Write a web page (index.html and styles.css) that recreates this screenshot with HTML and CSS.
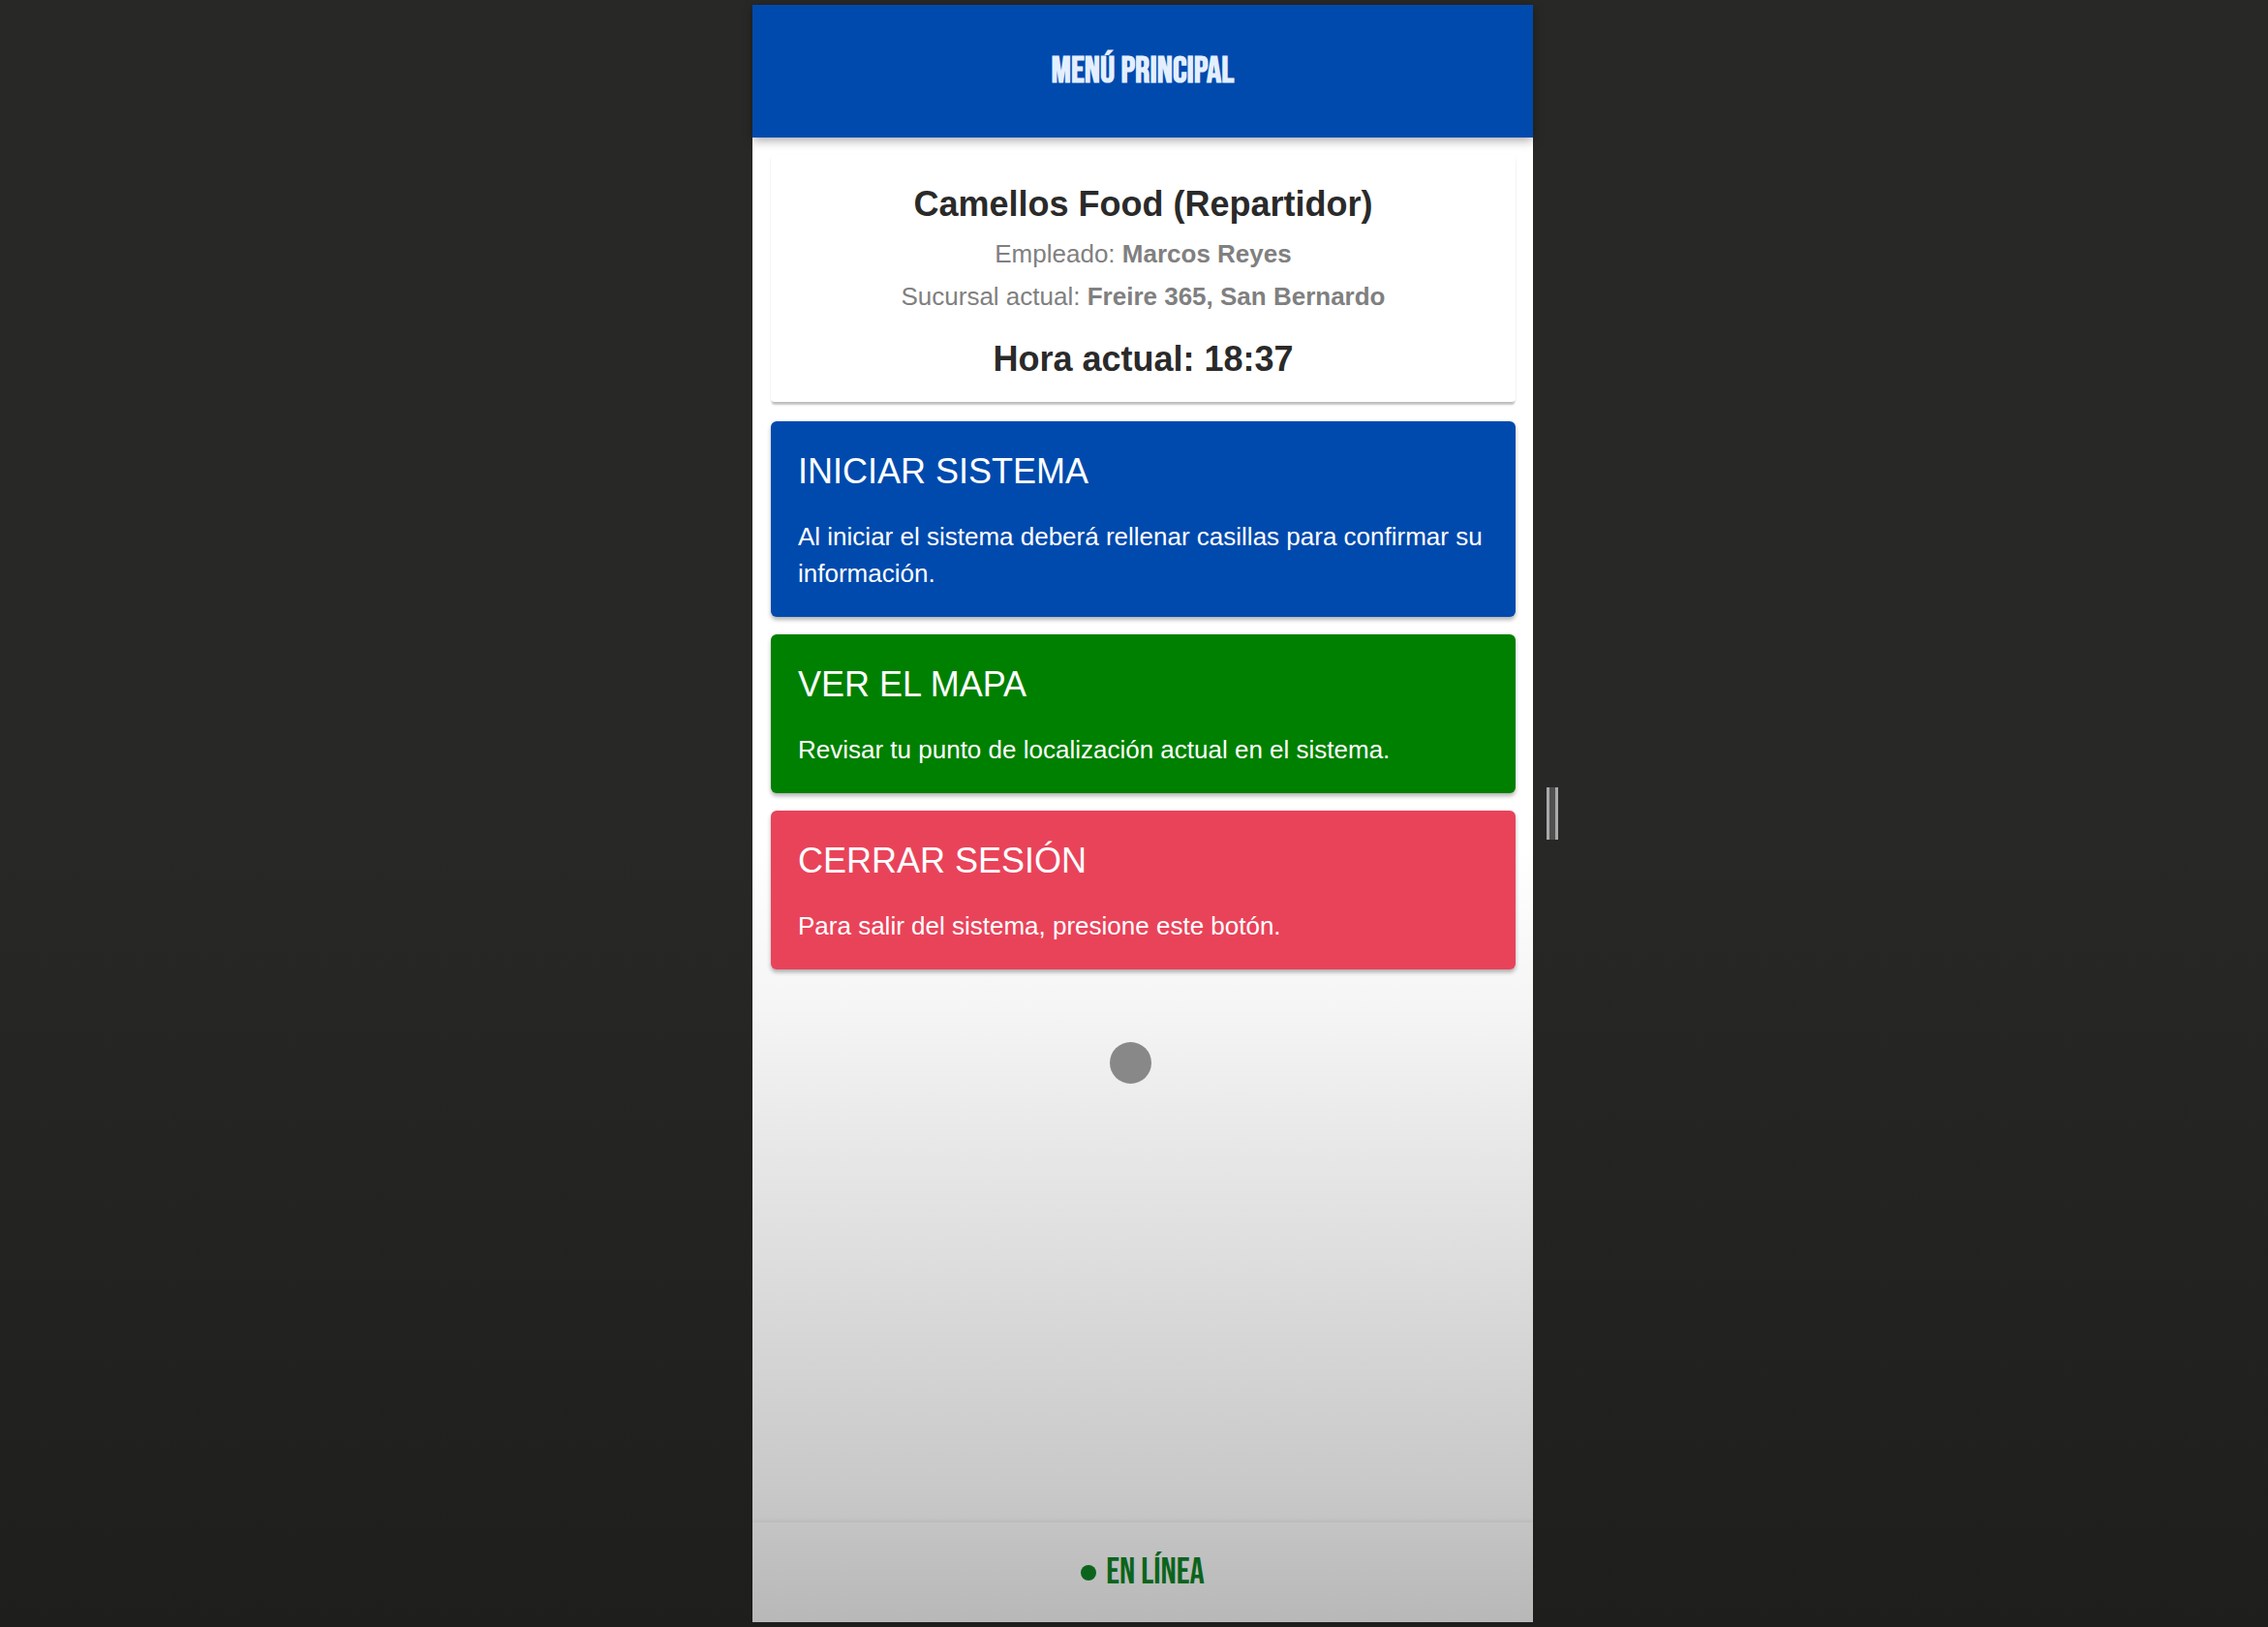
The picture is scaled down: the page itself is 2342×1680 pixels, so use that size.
FILE: index.html
```html
<!DOCTYPE html>
<html lang="es">
<head>
<meta charset="utf-8">
<meta name="viewport" content="width=device-width, initial-scale=1">
<title>Menú principal</title>
<link rel="stylesheet" href="styles.css">
</head>
<body>
<div class="stage">
  <div class="screen">
    <header class="topbar"><h1 class="topbar-title">MENÚ PRINCIPAL</h1></header>
    <main class="content">
      <section class="profile">
        <h2 class="profile-title">Camellos Food (Repartidor)</h2>
        <p class="profile-line">Empleado: <strong>Marcos Reyes</strong></p>
        <p class="profile-line">Sucursal actual: <strong>Freire 365, San Bernardo</strong></p>
        <p class="profile-time">Hora actual: 18:37</p>
      </section>
      <nav class="actions">
        <button class="action action-start" type="button">
          <span class="action-title">INICIAR SISTEMA</span>
          <span class="action-text">Al iniciar el sistema deberá rellenar casillas para confirmar su información.</span>
        </button>
        <button class="action action-map" type="button">
          <span class="action-title">VER EL MAPA</span>
          <span class="action-text">Revisar tu punto de localización actual en el sistema.</span>
        </button>
        <button class="action action-logout" type="button">
          <span class="action-title">CERRAR SESIÓN</span>
          <span class="action-text">Para salir del sistema, presione este botón.</span>
        </button>
      </nav>
    </main>
    <footer class="status"><span class="status-dot"></span><span>EN LÍNEA</span></footer>
    <div class="touch"></div>
  </div>
  <div class="resizer"></div>
</div>
</body>
</html>
```
FILE: styles.css
```css
* {
  box-sizing: border-box;
}

body {
  margin: 0;
  font-family: "Liberation Sans", Arial, sans-serif;
}

h1, h2, p {
  margin: 0;
}

.stage {
  display: grid;
  grid-template-columns: 1fr minmax(0, 806px) 1fr;
  min-height: 100vh;
  padding: 5px 0 5px 18px;
  background: linear-gradient(#282827 50%, #1e1e1d);
}

.screen {
  position: relative;
  grid-column: 2;
  display: flex;
  flex-direction: column;
  background: linear-gradient(#fff 52%, #f5f5f5 62%, #eaeaea 69%, #c8c8c8 92%, #b8b8b8);
}

.topbar {
  display: flex;
  align-items: center;
  justify-content: center;
  height: 137px;
  background: #004aad;
  box-shadow: 0 3px 10px rgba(0, 0, 0, 0.35);
}

.topbar-title,
.status {
  font-family: "Bebas Neue", "Liberation Sans Narrow", "Liberation Sans", sans-serif;
  line-height: 44px;
}

.topbar-title {
  color: #e3efff;
  font-size: 38px;
  font-weight: 700;
}

.content {
  flex: 1;
  display: flex;
  flex-direction: column;
  gap: 20px;
  padding: 18px 18px 20px 19px;
}

.profile {
  padding: 29px 20px 22px;
  border-radius: 4px;
  background: #fff;
  box-shadow: 0 4px 2px -1px rgba(0, 0, 0, 0.22), 0 1px 3px rgba(0, 0, 0, 0.08);
  color: #2a2a2a;
  text-align: center;
}

.profile-title,
.profile-time {
  font-size: 36px;
  font-weight: 700;
  line-height: 44px;
}

.profile-title {
  margin-bottom: 7px;
}

.profile-line {
  color: #808080;
  font-size: 26px;
  line-height: 44px;
}

.profile-time {
  margin-top: 21px;
}

.actions {
  display: flex;
  flex-direction: column;
  gap: 18px;
}

.action {
  display: flex;
  flex-direction: column;
  gap: 26px;
  padding: 30px 28px 26px;
  border: 0;
  border-radius: 6px;
  box-shadow: 0 3px 4px rgba(0, 0, 0, 0.3);
  color: #fff;
  font-family: inherit;
  text-align: left;
}

.action-title {
  font-size: 36px;
  line-height: 44px;
}

.action-text {
  font-size: 26px;
  line-height: 38px;
}

.action-start {
  background: #004aad;
}

.action-map {
  background: #008000;
}

.action-logout {
  background: #e9435a;
}

.status {
  display: flex;
  align-items: center;
  justify-content: center;
  gap: 10px;
  height: 103px;
  box-shadow: 0 -2px 3px rgba(0, 0, 0, 0.05);
  color: #0b641c;
  font-size: 38px;
}

.status-dot {
  width: 16px;
  height: 16px;
  border-radius: 50%;
  background: #0b641c;
}

/* Touch pointer, floats over the screen */
.touch {
  position: absolute;
  top: 1071px;
  left: 369px;
  width: 43px;
  height: 43px;
  border-radius: 50%;
  background: #888;
}

.resizer {
  align-self: center;
  width: 12px;
  height: 54px;
  margin-left: 14px;
  border: solid #a9a9a9;
  border-width: 0 3px;
  background: #505050;
}
```
